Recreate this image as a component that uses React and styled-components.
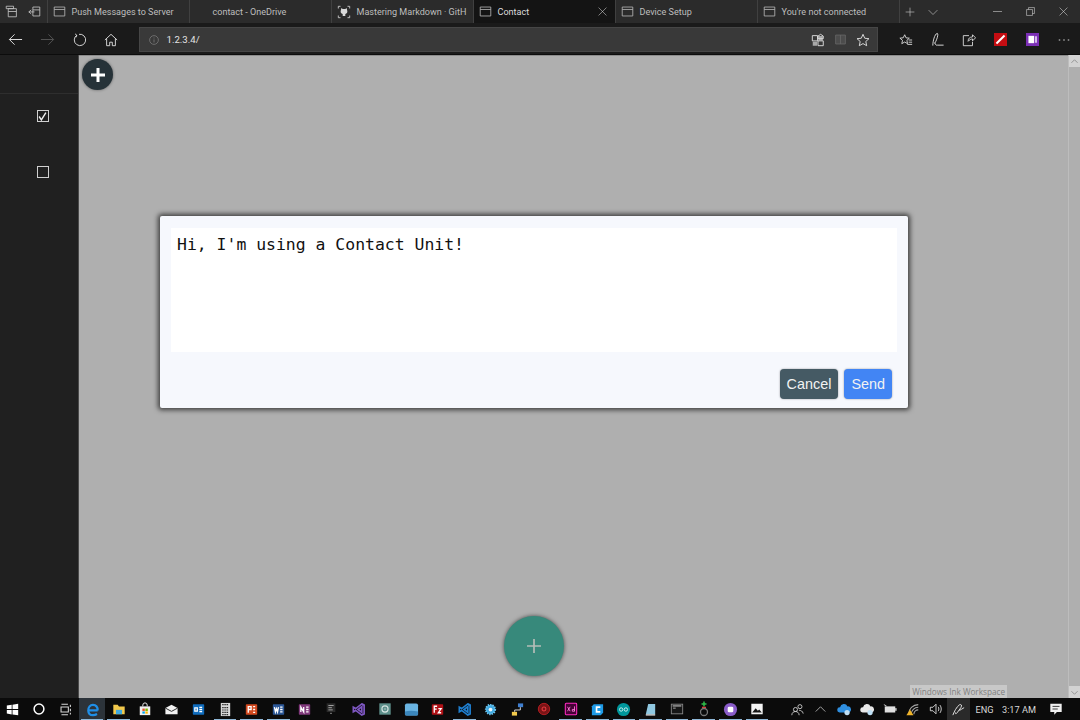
import React from "react"
import styled, { createGlobalStyle } from "styled-components"

const GlobalStyle = createGlobalStyle`
  html, body {
    margin: 0;
    padding: 0;
    height: 100%;
    overflow: hidden;
    background: #afafaf;
    font-family: Roboto, "Open Sans", sans-serif;
  }
`

const Screen = styled.div`
  width: 1080px;
  height: 720px;
  display: flex;
  flex-direction: column;
`

/* ---- tab strip ---- */
const TabStrip = styled.div`
  height: 23px;
  display: flex;
  background: #2b2b2b;
  color: #c4c4c4;
`

const StripTools = styled.div`
  width: 46.5px;
  flex: none;
  display: flex;
  align-items: center;
  gap: 10px;
  padding-left: 5px;
  box-sizing: border-box;
`

const Tab = styled.div`
  width: 142px;
  flex: none;
  box-sizing: border-box;
  height: 23px;
  display: flex;
  align-items: center;
  gap: 6px;
  padding-left: ${p => p.$pad ?? 5}px;
  font-size: 9.05px;
  white-space: nowrap;
  border-left: 1px solid #404040;
  background: ${p => (p.$active ? "#141414" : "#2b2b2b")};
  color: ${p => (p.$active ? "#dcdcdc" : "#bebebe")};
`

const TabLabel = styled.span`
  flex: 1;
`

const TabClose = styled.span`
  width: 16px;
  margin-right: 4px;
  display: flex;
  align-items: center;
  justify-content: center;
`

const NewTabArea = styled.div`
  width: 82px;
  flex: none;
  height: 23px;
  display: flex;
  align-items: center;
  gap: 13px;
  padding-left: 5px;
  box-sizing: border-box;
  border-left: 1px solid #404040;
`

const WindowButtons = styled.div`
  flex: 1;
  height: 23px;
  display: flex;
  align-items: center;
`

const WindowButton = styled.div`
  width: 33px;
  display: flex;
  justify-content: center;
`

/* ---- address toolbar ---- */
const Toolbar = styled.div`
  height: 32px;
  display: flex;
  align-items: center;
  padding-top: 2px;
  box-sizing: border-box;
  background: #1a1a1a;
  color: #e0e0e0;
  border-bottom: 1px solid #0c0c0c;
`

const NavButtons = styled.div`
  width: 138.5px;
  flex: none;
  display: flex;
  align-items: center;
`

const NavSlot = styled.div`
  width: 31.6px;
  display: flex;
  justify-content: center;
`

const AddressBar = styled.div`
  width: 739.5px;
  flex: none;
  height: 25px;
  display: flex;
  align-items: center;
  gap: 8px;
  padding: 0 7px 0 9px;
  box-sizing: border-box;
  background: #393939;
  border: 1px solid #464646;
  font-size: 9.6px;
  color: #e4e4e4;
`

const Url = styled.span`
  flex: 1;
`

const AddressIcons = styled.div`
  display: flex;
  align-items: center;
  gap: 9px;
`

const ToolIcons = styled.div`
  display: flex;
  align-items: center;
  padding-left: 12px;
`

/* ---- page ---- */
const Content = styled.div`
  flex: 1;
  min-height: 0;
  display: flex;
  position: relative;
`

const Sidebar = styled.aside`
  width: 79px;
  flex: none;
  box-sizing: border-box;
  background: #202020;
  border-right: 1px solid #4a4a4a;
`

const SidebarHead = styled.div`
  height: 38px;
  border-bottom: 1px solid #2e2e2e;
`

const SidebarList = styled.div`
  display: flex;
  flex-direction: column;
  align-items: center;
  gap: 44px;
  padding-top: 16px;
  padding-left: 7px;
`

const CheckBox = styled.div`
  width: 12px;
  height: 12px;
  box-sizing: border-box;
  border: 1.5px solid #d0d0d0;
  display: flex;
  align-items: center;
  justify-content: center;
`

const Main = styled.main`
  flex: 1;
  background: #afafaf;
  border-top: 1px solid #8c8c8c;
  padding: 3px;
`

const AddButton = styled.div`
  width: 31px;
  height: 31px;
  border-radius: 50%;
  background: #263238;
  display: flex;
  align-items: center;
  justify-content: center;
  box-shadow: 0 0 3px rgba(0, 0, 0, 0.45);
`

const Scrollbar = styled.div`
  width: 12px;
  flex: none;
  display: flex;
  flex-direction: column;
  justify-content: space-between;
  align-items: center;
  background: #afafaf;
  border-left: 1px solid #bdbdbd;
  box-sizing: border-box;
`

const ScrollArrow = styled.div`
  width: 11px;
  height: 12px;
  background: #d2d2d2;
  display: flex;
  align-items: center;
  justify-content: center;
`

const Overlay = styled.div`
  position: absolute;
  top: 0;
  left: 0;
  right: 12px;
  display: flex;
  justify-content: center;
  padding-top: 161px;
  pointer-events: none;
`

const Dialog = styled.div`
  width: 748px;
  height: 192px;
  box-sizing: border-box;
  padding: 12px 11px 9px;
  background: #f6f8fd;
  border-radius: 2px;
  box-shadow: 0 0 5px 2px rgba(0, 0, 0, 0.65);
  display: flex;
  flex-direction: column;
`

const Message = styled.div`
  height: 124px;
  flex: none;
  background: #fff;
  padding: 6px;
  box-sizing: border-box;
  font-family: "DejaVu Sans Mono", "Liberation Mono", monospace;
  font-size: 16.45px;
  line-height: 22px;
  color: #111;
`

const DialogActions = styled.div`
  display: flex;
  justify-content: flex-end;
  gap: 6px;
  padding: 17px 5px 0 0;
`

const ActionButton = styled.button`
  height: 30px;
  padding: 0 7px;
  border: none;
  border-radius: 4px;
  font-family: "Liberation Sans", Arial, sans-serif;
  font-size: 14.4px;
  color: #f2f2f2;
  background: ${p => p.$bg};
  box-shadow: 0 0 2px rgba(0, 0, 0, 0.4);
`

const Fab = styled.div`
  position: absolute;
  left: 504px;
  top: 561px;
  width: 60px;
  height: 60px;
  border-radius: 50%;
  background: #37897b;
  box-shadow: 0 0 4px rgba(0, 0, 0, 0.6);
  display: flex;
  align-items: center;
  justify-content: center;
`

const InkTooltip = styled.div`
  position: absolute;
  right: 73px;
  bottom: 0;
  height: 13px;
  padding: 0 2px;
  background: #c8c8c8;
  color: #808080;
  font-family: "Open Sans", sans-serif;
  font-size: 8.2px;
  line-height: 13px;
  white-space: nowrap;
`

/* ---- taskbar ---- */
const Taskbar = styled.footer`
  height: 22px;
  display: flex;
  align-items: stretch;
  background: #0b0b0b;
  color: #d8d8d8;
`

const TaskApps = styled.div`
  display: flex;
  margin-left: -1px;
`

const TaskSlot = styled.div`
  width: 26.6px;
  display: flex;
  align-items: center;
  justify-content: center;
  position: relative;
  background: ${p => (p.$focus ? "#2c333a" : "transparent")};

  &::after {
    content: "";
    display: ${p => (p.$running ? "block" : "none")};
    position: absolute;
    left: 2px;
    right: 2px;
    bottom: 0;
    height: 1.5px;
    background: #8fb8d8;
  }
`

const Tray = styled.div`
  margin-left: auto;
  display: flex;
  align-items: center;
  padding-right: 7px;
  font-size: 9.2px;
`

const TraySlot = styled.div`
  width: ${p => p.$width ?? 23}px;
  height: 100%;
  display: flex;
  align-items: center;
  justify-content: center;
  white-space: nowrap;
  background: ${p => (p.$on ? "#2a2a2a" : "transparent")};
`

/* ---- drawings ---- */
const Glyph = styled.svg`
  display: block;
  flex: none;
  fill: none;
  stroke: ${p => p.$color ?? "currentColor"};
  stroke-width: ${p => p.$stroke ?? 1};
`

const Icon = ({ size = 14, box = 16, color, stroke, children }) => (
  <Glyph width={size} height={size} viewBox={`0 0 ${box} ${box}`} $color={color} $stroke={stroke}>
    {children}
  </Glyph>
)

const PageIcon = () => (
  <Icon size={13} color="#b8b8b8">
    <path d="M1.5 2.5h13v11h-13zM1.5 5.5h13" />
  </Icon>
)

const Plus = ({ size, color, stroke }) => (
  <Icon size={size} color={color} stroke={stroke}>
    <path d="M8 1v14M1 8h14" />
  </Icon>
)

const TileIcon = ({ bg, text, fg = "#fff" }) => (
  <Icon size={13}>
    <rect x="1" y="1.5" width="14" height="13" rx="1" fill={bg} stroke="none" />
    {text && <path d={text} stroke={fg} strokeWidth="1.6" />}
  </Icon>
)

const apps = [
  { key: "start", node: (
    <Icon size={13}>
      <path d="M1 3l6-1v5.500H1zM8 2l7-1v6.500H8zM1 8.500h6V14l-6-1zM8 8.500h7V15l-7-1z" fill="#fff" stroke="none" />
    </Icon>
  ) },
  { key: "cortana", node: <Icon size={14} color="#fff" stroke="1.7"><circle cx="8" cy="8" r="5.600" /></Icon> },
  { key: "view", node: (
    <Icon size={13} color="#d8d8d8" stroke="1.3">
      <path d="M3 1.500h8M3 14.500h8M2.500 5h9v6h-9zM14 2v3M14 7v3M14 12v2" />
    </Icon>
  ) },
  { key: "edge", focus: true, running: true, node: (
    <Icon size={15} color="#1f8fe8" stroke="2.3">
      <path d="M13.500 9h-10C3.500 5.500 5.500 3 8.500 3s5 2.400 5 6M3.500 9c0 3 2 5 5 5 1.600 0 3-.4 4.300-1.200" />
    </Icon>
  ) },
  { key: "explorer", running: true, node: (
    <Icon size={14}>
      <path d="M1.500 3h5L8 5h6.500v9h-13z" fill="#f2c94c" stroke="none" />
      <rect x="4.500" y="9" width="7" height="5" fill="#3fa9e0" stroke="none" />
    </Icon>
  ) },
  { key: "store", node: (
    <Icon size={14}>
      <path d="M5.500 5V3.500a2.500 2.500 0 015 0V5" stroke="#eee" strokeWidth="1.100" />
      <rect x="2" y="5" width="12" height="10" fill="#f2f2f2" stroke="none" />
      <path d="M5 7.500h2.800v2.800H5z" fill="#e8562e" stroke="none" />
      <path d="M8.400 7.500h2.800v2.800H8.400z" fill="#7fba00" stroke="none" />
      <path d="M5 10.800h2.800v2.500H5z" fill="#00a4ef" stroke="none" />
      <path d="M8.400 10.800h2.800v2.500H8.400z" fill="#ffb900" stroke="none" />
    </Icon>
  ) },
  { key: "mail", node: (
    <Icon size={15}>
      <path d="M1.500 6.500L8 3l6.500 3.500V13h-13z" fill="#f2f2f2" stroke="none" />
      <path d="M1.500 6.500L8 10l6.500-3.500" stroke="#222" strokeWidth="1" />
    </Icon>
  ) },
  { key: "outlook", node: <TileIcon bg="#0f6cbd" text="M3.500 6h3v4h-3zM9 5.500h3.500M9 8h3.500M9 10.500h3.500" /> },
  { key: "calc", running: true, node: (
    <Icon size={15}>
      <rect x="3" y="1" width="10" height="14" fill="#d8d8d8" stroke="none" />
      <path d="M4.500 2.800h7M4.500 6h7M4.500 8.500h7M4.500 11h7M4.500 13.500h7" stroke="#222" strokeWidth="1.200" strokeDasharray="1.500 .8" />
    </Icon>
  ) },
  { key: "ppt", running: true, node: <TileIcon bg="#d2491f" text="M4 12V4.500h3.500V8H4M10 4.500h2.500M10 8h2.500M10 11.500h2.500" /> },
  { key: "word", running: true, node: <TileIcon bg="#2b5797" text="M3 5l1.200 6 1.300-4 1.300 4L8 5M10 5h3M10 8h3M10 11h3" /> },
  { key: "onenote", node: <TileIcon bg="#80397b" text="M3.500 11V5L7 11V5M10 5h3M10 8h3M10 11h3" /> },
  { key: "terminal", node: (
    <Icon size={14}>
      <rect x="3" y="1.500" width="10" height="10" fill="#2a2a2a" stroke="none" />
      <path d="M5 4h6M5 6.500h4M5 9h5" stroke="#b0b0b0" strokeWidth="1" />
      <path d="M7 13h2" stroke="#777" strokeWidth="1.500" />
    </Icon>
  ) },
  { key: "vs", node: (
    <Icon size={15} color="#7e57c2" stroke="1.800">
      <path d="M11.500 2L14 3.200v9.600L11.500 14 5 9l-2.500 1.500v-5L5 7zM11.500 5v6l-4-3z" />
    </Icon>
  ) },
  { key: "disc", node: (
    <Icon size={14}>
      <rect x="1.500" y="1.500" width="13" height="13" fill="#5d8f8a" stroke="none" />
      <circle cx="8" cy="8" r="3.500" stroke="#d6e4e2" strokeWidth="1.300" />
      <circle cx="8" cy="8" r=".8" fill="#d6e4e2" stroke="none" />
    </Icon>
  ) },
  { key: "blue", node: (
    <Icon size={15}>
      <rect x="1" y="1.500" width="14" height="13" rx="2" fill="#6ab4e2" stroke="none" />
      <path d="M1 10c4-1 9-1 14 0v3a1.500 1.500 0 01-1.500 1.500h-11A1.500 1.500 0 011 13z" fill="#3b87bd" stroke="none" />
    </Icon>
  ) },
  { key: "filezilla", node: <TileIcon bg="#b01116" text="M4 12V4h3.500M4 7.500h3M9 7h3.500L9 12h3.500" /> },
  { key: "vscode", running: true, node: (
    <Icon size={15} color="#1f7fd0" stroke="1.800">
      <path d="M11.500 2L14 3.200v9.600L11.500 14 5 9l-2.500 1.500v-5L5 7zM11.500 5v6l-4-3z" />
    </Icon>
  ) },
  { key: "gear", node: (
    <Icon size={15}>
      <circle cx="8" cy="8" r="5" fill="#3fa9e0" stroke="#6bc3ee" strokeDasharray="1.500 1" strokeWidth="2" />
      <circle cx="8" cy="8" r="2" fill="#e8f4fb" stroke="none" />
    </Icon>
  ) },
  { key: "network", node: (
    <Icon size={15}>
      <rect x="8.500" y="1.500" width="5.500" height="4" fill="#3f7fd0" stroke="none" />
      <rect x="2" y="10.500" width="5.500" height="4" fill="#f2c94c" stroke="none" />
      <path d="M11 5.500v3H5v2" stroke="#ddd" strokeWidth="1" />
    </Icon>
  ) },
  { key: "at", node: (
    <Icon size={14}>
      <circle cx="8" cy="8" r="6.500" fill="#7a1416" stroke="#c01f24" strokeWidth="1" />
      <circle cx="8" cy="8" r="2.200" stroke="#e63a3f" strokeWidth="1.200" />
    </Icon>
  ) },
  { key: "xd", running: true, node: (
    <Icon size={14}>
      <rect x="1.500" y="1.500" width="13" height="13" rx="1" fill="#470137" stroke="#ff2bc2" strokeWidth="1.200" />
      <path d="M4 5.500l3 5M7 5.500l-3 5M9.500 8.500H12v2H9.500zM12 5v5.500" stroke="#ff7fd9" strokeWidth="1" />
    </Icon>
  ) },
  { key: "cura", running: true, node: (
    <Icon size={15}>
      <path d="M4 2.500h10v9L11.500 14H2V4.500z" fill="#1e9be8" stroke="none" />
      <path d="M11 5.500H7v5h4" stroke="#fff" strokeWidth="1.800" />
    </Icon>
  ) },
  { key: "arduino", running: true, node: (
    <Icon size={15}>
      <circle cx="8" cy="8" r="7" fill="#00979c" stroke="none" />
      <circle cx="5.500" cy="8" r="1.800" stroke="#cdeeee" strokeWidth="1" />
      <circle cx="10.500" cy="8" r="1.800" stroke="#cdeeee" strokeWidth="1" />
    </Icon>
  ) },
  { key: "note", running: true, node: (
    <Icon size={15}>
      <path d="M5.500 2H13v11H3z" fill="#8fc7e0" stroke="none" />
      <path d="M3 13h10v1.500H3z" fill="#d8d8d8" stroke="none" />
    </Icon>
  ) },
  { key: "cmd", running: true, node: (
    <Icon size={14}>
      <rect x="1.500" y="2.500" width="13" height="11" fill="#161616" stroke="#8a8a8a" strokeWidth="1" />
      <path d="M3 4.500h10" stroke="#c0c0c0" strokeWidth="1.300" />
      <path d="M3.500 7h3" stroke="#bbb" strokeWidth="1" />
    </Icon>
  ) },
  { key: "plusbot", running: true, node: (
    <Icon size={16}>
      <path d="M8 .5v5M5.500 3h5" stroke="#2fc04a" strokeWidth="1.500" />
      <path d="M6 6.500h4" stroke="#e23b3b" strokeWidth="1.500" />
      <circle cx="8" cy="11" r="3.500" stroke="#777" strokeWidth="1.300" />
    </Icon>
  ) },
  { key: "record", running: true, node: (
    <Icon size={15}>
      <circle cx="8" cy="8" r="7" fill="#8a5cc9" stroke="none" />
      <rect x="5" y="5" width="6" height="6" rx="1.500" fill="#fff" stroke="none" />
    </Icon>
  ) },
  { key: "photos", running: true, node: (
    <Icon size={14}>
      <rect x="1.500" y="2" width="13" height="12" fill="#f4f4f4" stroke="none" />
      <path d="M2.500 12l4-5L9 10l1.500-1.500 3 3.500z" fill="#161616" stroke="none" />
    </Icon>
  ) },
]

const App = () => (
  <>
    <GlobalStyle />
    <Screen>
      <TabStrip>
        <StripTools>
          <Icon size={13} color="#c8c8c8">
            <path d="M1.500 1.500h9v3h-9zM4 4.500h10v10H4zM4 8h10" />
          </Icon>
          <Icon size={13} color="#c8c8c8">
            <path d="M6 2.500h8.500v11H6zM6 6h8.500M1 8.500h7M4 6L1 8.500 4 11" />
          </Icon>
        </StripTools>
        <Tab><PageIcon /><TabLabel>Push Messages to Server</TabLabel></Tab>
        <Tab $pad={23}><TabLabel>contact - OneDrive</TabLabel></Tab>
        <Tab>
          <Icon size={14} color="#d0d0d0">
            <path d="M1.500 4V1.500H4M12 1.500h2.500V4M14.500 12v2.500H12M4 14.500H1.500V12" />
            <path d="M5 3.500l1.500 1h3l1.500-1 .6 2.500c.8 2.500-.3 4-2.100 4.300v2.200h-3v-2.200C4.700 10 3.600 8.500 4.400 6z" fill="#d8d8d8" stroke="none" />
          </Icon>
          <TabLabel>Mastering Markdown · GitH</TabLabel>
        </Tab>
        <Tab $active>
          <PageIcon /><TabLabel>Contact</TabLabel>
          <TabClose>
            <Icon size={9} color="#d0d0d0"><path d="M1 1l14 14M15 1L1 15" /></Icon>
          </TabClose>
        </Tab>
        <Tab><PageIcon /><TabLabel>Device Setup</TabLabel></Tab>
        <Tab><PageIcon /><TabLabel>You're not connected</TabLabel></Tab>
        <NewTabArea>
          <Plus size={10} color="#c8c8c8" />
          <Icon size={10} color="#c8c8c8"><path d="M1 5l7 7 7-7" /></Icon>
        </NewTabArea>
        <WindowButtons>
          <WindowButton><Icon size={9} color="#d8d8d8"><path d="M0 8h16" /></Icon></WindowButton>
          <WindowButton><Icon size={9} color="#d8d8d8"><path d="M1 4.500h10.500V15H1zM4.500 4.500V1H15v10.500h-3.500" /></Icon></WindowButton>
          <WindowButton><Icon size={9} color="#d8d8d8"><path d="M1 1l14 14M15 1L1 15" /></Icon></WindowButton>
        </WindowButtons>
      </TabStrip>

      <Toolbar>
        <NavButtons>
          <NavSlot><Icon size={15} color="#e8e8e8"><path d="M15 8H1.500M7 2.500L1.500 8 7 13.500" /></Icon></NavSlot>
          <NavSlot><Icon size={15} color="#555"><path d="M1 8h13.500M9 2.500L14.500 8 9 13.500" /></Icon></NavSlot>
          <NavSlot><Icon size={14} color="#e8e8e8"><path d="M5.500 2.500A6.500 6.500 0 108 1.500M3.500 1l2 1.500-1 2.500" /></Icon></NavSlot>
          <NavSlot><Icon size={14} color="#e8e8e8"><path d="M1 8l7-6.500L15 8M3 6.500v8h3.500v-4h3v4H13v-8" /></Icon></NavSlot>
        </NavButtons>
        <AddressBar>
          <Icon size={10} color="#8a8a8a"><circle cx="8" cy="8" r="7" /><path d="M8 7v5M8 4v1.500" /></Icon>
          <Url>1.2.3.4/</Url>
          <AddressIcons>
            <Icon size={14} color="#e8e8e8">
              <path d="M1.500 3h6v6h-6zM8 9h6v5.500H8zM8 3.500l3-2 3 2v3H8z" />
              <path d="M2 10h5v4.500H2zM8.500 3.500h5v5h-5z" fill="#d8d8d8" stroke="none" opacity=".7" />
            </Icon>
            <Icon size={13} color="#666"><path d="M2 2.500h12v11H2zM8 2.500v11" fill="#4c4c4c" /></Icon>
            <Icon size={14} color="#e8e8e8"><path d="M8 1.500l2 4.500 4.800.5-3.600 3.200 1 4.800L8 12.100l-4.200 2.400 1-4.800L1.200 6.500 6 6z" /></Icon>
          </AddressIcons>
        </AddressBar>
        <ToolIcons>
          <NavSlot><Icon size={14} color="#e0e0e0"><path d="M6.500 2L8 5.500l3.800.4L9 8.400l.8 3.800-3.300-1.900-3.300 1.900.8-3.800L1 5.900l3.800-.4zM11 8h4M11 10.500h4M9.500 13H15" /></Icon></NavSlot>
          <NavSlot><Icon size={15} color="#e0e0e0"><path d="M3 14.500c0-5 2-12 4.500-13 2-.5 0 7-2.500 10.500M5 11.500c1 2.500 2 3 3 2.500h6.500" /></Icon></NavSlot>
          <NavSlot><Icon size={14} color="#e0e0e0"><path d="M8 3H1.500v11.500H12V10M7 9.500C7 6 9 4.500 12 4.500V2l3.500 3.500L12 9V6.800c-2 0-3.500 1-5 2.700z" /></Icon></NavSlot>
          <NavSlot>
            <Icon size={13}>
              <rect width="16" height="16" fill="#c40d12" stroke="none" />
              <path d="M3 13L13 3" stroke="#fff" strokeWidth="2.500" />
            </Icon>
          </NavSlot>
          <NavSlot>
            <Icon size={13}>
              <rect width="16" height="16" fill="#7b2fb5" stroke="none" />
              <rect x="3" y="3.500" width="7" height="9" fill="#fff" stroke="none" />
              <path d="M11 4h2.500v8H11z" fill="#d9c0ec" stroke="none" />
            </Icon>
          </NavSlot>
          <NavSlot><Icon size={12} color="#d8d8d8" stroke="1.500"><path d="M1 8h2M7 8h2M13 8h2" /></Icon></NavSlot>
        </ToolIcons>
      </Toolbar>

      <Content>
        <Sidebar>
          <SidebarHead />
          <SidebarList>
            <CheckBox>
              <Icon size={9} color="#f0f0f0" stroke="2.500"><path d="M2 8l4 6L14 1" /></Icon>
            </CheckBox>
            <CheckBox />
          </SidebarList>
        </Sidebar>
        <Main>
          <AddButton>
            <Plus size={16} color="#fff" stroke="3" />
          </AddButton>
        </Main>
        <Scrollbar>
          <ScrollArrow>
            <Icon size={7} color="#8c8c8c" stroke="2"><path d="M1 11l7-7 7 7" /></Icon>
          </ScrollArrow>
          <ScrollArrow>
            <Icon size={7} color="#8c8c8c" stroke="2"><path d="M1 5l7 7 7-7" /></Icon>
          </ScrollArrow>
        </Scrollbar>

        <Overlay>
          <Dialog>
            <Message>Hi, I'm using a Contact Unit!</Message>
            <DialogActions>
              <ActionButton $bg="#455a64">Cancel</ActionButton>
              <ActionButton $bg="#4285f4">Send</ActionButton>
            </DialogActions>
          </Dialog>
        </Overlay>

        <Fab>
          <Plus size={16} color="#b4bdb8" stroke="1.700" />
        </Fab>

        <InkTooltip>Windows Ink Workspace</InkTooltip>
      </Content>

      <Taskbar>
        <TaskApps>
          {apps.map(a => (
            <TaskSlot key={a.key} $focus={a.focus} $running={a.running}>{a.node}</TaskSlot>
          ))}
        </TaskApps>
        <Tray>
          <TraySlot>
            <Icon size={13} color="#e0e0e0"><circle cx="11" cy="4.500" r="2.500" /><circle cx="5.500" cy="8" r="2.500" /><path d="M1 15c0-3 2-4.500 4.500-4.500S10 12 10 15M10 9c2 0 4.500 1 5 4" /></Icon>
          </TraySlot>
          <TraySlot>
            <Icon size={11} color="#e0e0e0"><path d="M1 11l7-7 7 7" /></Icon>
          </TraySlot>
          <TraySlot>
            <Icon size={14}>
              <path d="M3 12a3 3 0 01.500-6A4.500 4.500 0 0112 5a3.500 3.500 0 011 7z" fill="#2f8fe0" stroke="none" />
              <circle cx="11.500" cy="12" r="3" fill="#bfe0f5" stroke="none" />
            </Icon>
          </TraySlot>
          <TraySlot>
            <Icon size={14}>
              <path d="M3 12a3 3 0 01.500-6A4.500 4.500 0 0112 5a3.500 3.500 0 011 7z" fill="#e8e8e8" stroke="none" />
              <circle cx="11.500" cy="12" r="3" fill="#bfe0f5" stroke="none" />
            </Icon>
          </TraySlot>
          <TraySlot>
            <Icon size={14}>
              <path d="M1 3l3 1.500" stroke="#ddd" />
              <rect x="2" y="5" width="12" height="7" fill="#e0e0e0" stroke="none" />
              <rect x="14" y="7" width="1.500" height="3" fill="#e0e0e0" stroke="none" />
            </Icon>
          </TraySlot>
          <TraySlot>
            <Icon size={14}>
              <path d="M6 14a8 8 0 018-8M9 14a5 5 0 015-5M3 14A11 11 0 0114 3" stroke="#a8a8a8" strokeWidth="1.200" />
              <path d="M4.500 8.500l4 6.500h-8z" fill="#f0b429" stroke="none" />
            </Icon>
          </TraySlot>
          <TraySlot>
            <Icon size={14} color="#e0e0e0"><path d="M1.500 6h3L8 2.500v11L4.500 10h-3zM10.500 5.500c1 1.500 1 3.500 0 5M12.500 3.500c2 2.500 2 6.500 0 9" /></Icon>
          </TraySlot>
          <TraySlot $on>
            <Icon size={15} color="#e8e8e8"><path d="M2 14c1-3 4-9 7-11 2-1 3 .5 1.500 3L6.500 11.500c-1 1.500-2.500 1-2-.5M9 9c1.500-.5 3-2 5-3" /></Icon>
          </TraySlot>
          <TraySlot $width={29}>ENG</TraySlot>
          <TraySlot $width={40}>3:17 AM</TraySlot>
          <TraySlot $width={34}>
            <Icon size={14}>
              <path d="M1.500 2h13v9.500H9l-3 3v-3H1.500z" fill="#f0f0f0" stroke="none" />
              <path d="M4 5h8M4 8h6" stroke="#222" strokeWidth="1" />
            </Icon>
          </TraySlot>
        </Tray>
      </Taskbar>
    </Screen>
  </>
)

export default App
